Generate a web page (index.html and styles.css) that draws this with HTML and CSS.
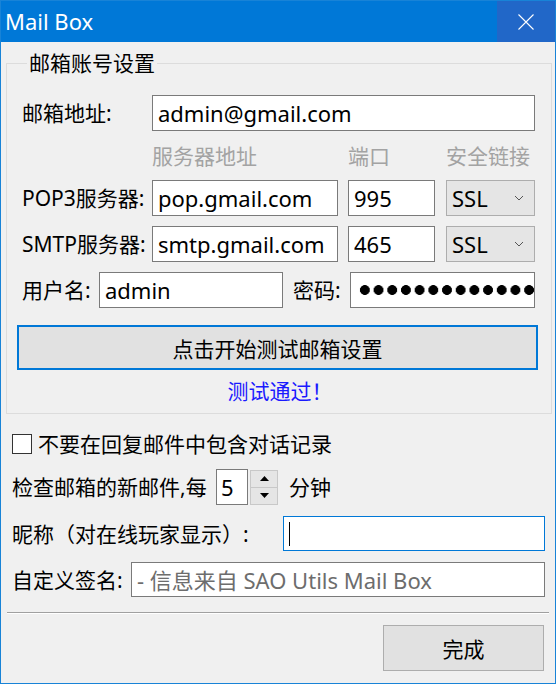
FILE: index.html
```html
<!DOCTYPE html>
<html lang="zh-CN">
<head>
    <meta charset="UTF-8">
    <title>Mail Box</title>
    <link rel="stylesheet" href="styles.css">
</head>
<body>

<div class="window">
    <div class="titlebar">
        <span class="title">Mail Box</span>
        <div class="close">
            <svg width="16" height="16" viewBox="0 0 16 16">
                <path d="M0.5 0.5 L15.5 15.5 M15.5 0.5 L0.5 15.5" stroke="#fff" stroke-width="1.1" fill="none"/>
            </svg>
        </div>
    </div>

    <div class="content">
        <fieldset class="group">
            <legend>邮箱账号设置</legend>

            <div class="row">
                <label class="lbl w-server">邮箱地址:</label>
                <input class="field email" type="text" value="admin@gmail.com">
            </div>

            <div class="row headers">
                <span class="hd hd-server">服务器地址</span>
                <span class="hd hd-port">端口</span>
                <span class="hd">安全链接</span>
            </div>

            <div class="row">
                <label class="lbl w-server">POP3服务器:</label>
                <input class="field server" type="text" value="pop.gmail.com">
                <input class="field port" type="text" value="995">
                <div class="select">SSL
                    <svg width="10" height="6" viewBox="0 0 10 6"><path d="M1 1 L5 5 L9 1" stroke="#555" fill="none"/></svg>
                </div>
            </div>

            <div class="row gap">
                <label class="lbl w-server">SMTP服务器:</label>
                <input class="field server" type="text" value="smtp.gmail.com">
                <input class="field port" type="text" value="465">
                <div class="select">SSL
                    <svg width="10" height="6" viewBox="0 0 10 6"><path d="M1 1 L5 5 L9 1" stroke="#555" fill="none"/></svg>
                </div>
            </div>

            <div class="row gap">
                <label class="lbl w-user">用户名:</label>
                <input class="field user" type="text" value="admin">
                <label class="lbl w-pass">密码:</label>
                <div class="field password"><span class="dots"></span></div>
            </div>

            <button class="btn test">点击开始测试邮箱设置</button>
            <p class="status">测试通过！</p>
        </fieldset>

        <div class="line check-line">
            <span class="checkbox"></span>
            <span>不要在回复邮件中包含对话记录</span>
        </div>

        <div class="line interval">
            <span class="interval-text">检查邮箱的新邮件,每</span>
            <input class="field minutes" type="text" value="5">
            <div class="spin">
                <span class="spin-btn"><svg width="9" height="5" viewBox="0 0 9 5"><path d="M0 5 L4.5 0 L9 5 Z" fill="#000"/></svg></span>
                <span class="spin-btn"><svg width="9" height="5" viewBox="0 0 9 5"><path d="M0 0 L4.5 5 L9 0 Z" fill="#000"/></svg></span>
            </div>
            <span class="unit">分钟</span>
        </div>

        <div class="line nick">
            <span>昵称（对在线玩家显示）:</span>
            <div class="field focused"><span class="caret"></span></div>
        </div>

        <div class="line sign">
            <span>自定义签名:</span>
            <input class="field signature" type="text" placeholder="- 信息来自 SAO Utils Mail Box">
        </div>

        <div class="separator"></div>

        <div class="footer">
            <button class="btn done">完成</button>
        </div>
    </div>
</div>

</body>
</html>
```

FILE: styles.css
```css
body {
    margin: 0;
    font-family: "Noto Sans", "Noto Sans CJK SC", sans-serif;
    font-size: 21px;
    color: #000;
}
.window {
    width: 556px;
    height: 684px;
    box-sizing: border-box;
    border: 1px solid #1883d7;
    background-color: #f0f0f0;
    display: flex;
    flex-direction: column;
}
.titlebar {
    height: 41px;
    background-color: #0078d7;
    display: flex;
    align-items: center;
    color: #fff;
}
.title {
    flex: 1;
    padding-left: 4px;
    font-size: 22px;
    line-height: 41px;
}
.close {
    width: 58px;
    height: 41px;
    background-color: #2167c8;
    display: flex;
    align-items: center;
    justify-content: center;
}
.content {
    flex: 1;
    display: flex;
    flex-direction: column;
}

/* account group */
.group {
    margin: 9px 6px 0 5px;
    padding: 20px 13px 10px 15px;
    border: 1px solid #dcdcdc;
}
.group legend {
    padding: 0 2px;
    margin-left: 5px;
    line-height: 24px;
}
.row {
    display: flex;
    align-items: center;
    height: 36px;
}
.row.gap {
    margin-top: 10px;
}
.lbl {
    flex: none;
    line-height: 24px;
    white-space: nowrap;
}
.w-server { width: 130px; }
.w-user { width: 77px; }
.w-pass { width: 57px; margin-left: 10px; }

.field {
    box-sizing: border-box;
    height: 36px;
    border: 1px solid #7a7a7a;
    background-color: #fff;
    font-family: inherit;
    font-size: 22px;
    padding: 0 5px;
    margin: 0;
    color: #000;
    outline: none;
}
.email { width: 383px; }
.server { width: 186px; }
.port { width: 87px; margin-left: 10px; }
.user { width: 184px; }
.password {
    width: 185px;
    display: flex;
    align-items: center;
    padding: 0 0 0 7px;
    overflow: hidden;
}
.dots {
    flex: 1;
    height: 14px;
    background: radial-gradient(circle, #000 4.6px, transparent 5.2px) 0 0 / 13.7px 14px repeat-x;
}
.select {
    box-sizing: border-box;
    width: 89px;
    height: 36px;
    margin-left: 11px;
    border: 1px solid #adadad;
    background-color: #e5e5e5;
    padding: 0 10px 0 5px;
    display: flex;
    align-items: center;
    justify-content: space-between;
    font-size: 22px;
    line-height: 24px;
}
.headers {
    height: 49px;
    color: #a3a3a3;
}
.hd {
    line-height: 24px;
}
.hd-server {
    margin-left: 130px;
    width: 196px;
}
.hd-port {
    width: 98px;
}
.btn {
    font-family: inherit;
    font-size: 21px;
    color: #000;
    background-color: #e1e1e1;
    border: 1px solid #adadad;
    cursor: pointer;
}
.test {
    display: block;
    box-sizing: border-box;
    width: 521px;
    height: 45px;
    margin: 17px 0 0 -5px;
    border: 2px solid #0078d7;
}
.status {
    margin: 9px 0 0 0;
    text-align: center;
    color: #1a1aff;
    line-height: 24px;
}

/* options below the group */
.line {
    display: flex;
    align-items: center;
    padding-left: 11px;
    line-height: 24px;
}
.check-line {
    margin-top: 18px;
    height: 24px;
}
.checkbox {
    box-sizing: border-box;
    width: 20px;
    height: 20px;
    border: 1px solid #333;
    background-color: #fff;
    margin-right: 6px;
}
.interval {
    margin-top: 13px;
    height: 36px;
}
.interval-text {
    width: 204px;
    white-space: nowrap;
}
.minutes {
    width: 32px;
    height: 36px;
    padding: 0 4px;
}
.spin {
    box-sizing: border-box;
    width: 28px;
    height: 35px;
    margin-left: 2px;
    border: 1px solid #c8c8c8;
    display: flex;
    flex-direction: column;
}
.spin-btn {
    flex: 1;
    background-color: #e5e5e5;
    display: flex;
    align-items: center;
    justify-content: center;
}
.spin-btn + .spin-btn {
    border-top: 1px solid #c8c8c8;
}
.unit {
    margin-left: 11px;
}
.nick {
    margin-top: 11px;
    height: 35px;
    justify-content: space-between;
    padding-right: 10px;
}
.focused {
    width: 262px;
    height: 35px;
    border-color: #0078d7;
    display: flex;
    align-items: center;
}
.caret {
    width: 1px;
    height: 24px;
    background-color: #000;
}
.sign {
    margin-top: 11px;
    height: 35px;
    justify-content: space-between;
    padding-right: 10px;
}
.signature {
    width: 414px;
    height: 35px;
}
.signature::placeholder {
    color: #6d6d6d;
}
.separator {
    margin: 15px 6px 0 6px;
    height: 1px;
    background-color: #a0a0a0;
    border-bottom: 1px solid #fff;
}
.footer {
    display: flex;
    justify-content: flex-end;
    padding-right: 11px;
    margin-top: 11px;
}
.done {
    width: 161px;
    height: 46px;
}
```
